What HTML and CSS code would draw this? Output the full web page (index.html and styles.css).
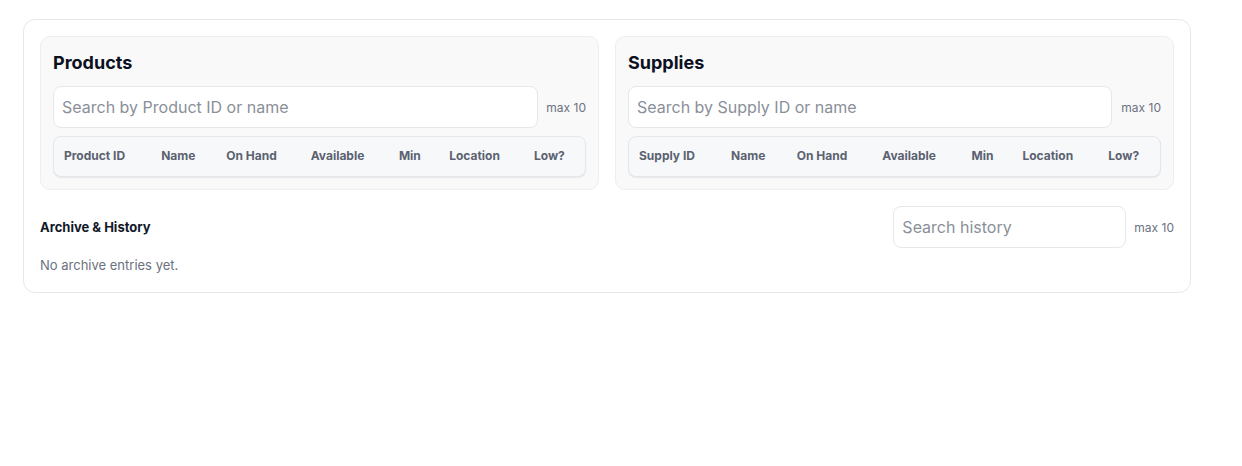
FILE: index.html
```html
<!DOCTYPE html>
<html lang="en">
<head>
<meta charset="utf-8">
<title>Inventory</title>
<link rel="stylesheet" href="styles.css">
</head>
<body>
<div class="card">
  <div class="panels">
    <section class="panel">
      <h2 class="panel-title">Products</h2>
      <div class="search-row">
        <input class="search" type="text" placeholder="Search by Product ID or name">
        <span class="max">max 10</span>
      </div>
      <div class="table-wrap">
        <table class="grid">
          <thead>
            <tr><th>Product ID</th><th>Name</th><th>On Hand</th><th>Available</th><th>Min</th><th>Location</th><th>Low?</th></tr>
          </thead>
        </table>
      </div>
    </section>
    <section class="panel">
      <h2 class="panel-title">Supplies</h2>
      <div class="search-row">
        <input class="search" type="text" placeholder="Search by Supply ID or name">
        <span class="max">max 10</span>
      </div>
      <div class="table-wrap">
        <table class="grid">
          <thead>
            <tr><th>Supply ID</th><th>Name</th><th>On Hand</th><th>Available</th><th>Min</th><th>Location</th><th>Low?</th></tr>
          </thead>
        </table>
      </div>
    </section>
  </div>
  <div class="history">
    <div class="history-head">
      <h3 class="history-title">Archive &amp; History</h3>
      <div class="history-search">
        <input class="search small" type="text" placeholder="Search history">
        <span class="max">max 10</span>
      </div>
    </div>
    <p class="empty">No archive entries yet.</p>
  </div>
</div>
</body>
</html>
```

FILE: styles.css
```css
* { box-sizing: border-box; }
html, body { margin: 0; padding: 0; background: #fff; }
body {
  font-family: Inter, "Noto Sans", Arial, sans-serif;
  color: #111827;
  padding: 19px 0 0 23px;
}
.card {
  width: 1168px;
  border: 1px solid #e5e7eb;
  border-radius: 12px;
  padding: 16px 16px 17px;
  background: #fff;
}
.panels {
  display: grid;
  grid-template-columns: 1fr 1fr;
  gap: 16px;
}
.panel {
  background: #f9f9fa;
  border: 1px solid #eceef1;
  border-radius: 10px;
  padding: 12px;
}
.panel-title {
  margin: 0 0 10px;
  font-size: 18px;
  line-height: 27px;
  font-weight: 700;
  color: #0b1020;
}
.search-row {
  display: flex;
  align-items: center;
  gap: 8px;
}
.search {
  flex: 1;
  height: 42px;
  border: 1px solid #e5e7eb;
  border-radius: 8px;
  background: #fff;
  padding: 0 8px;
  font-family: inherit;
  font-size: 16px;
  color: #111827;
  outline: none;
}
.search::placeholder { color: #8a8f98; }
.max {
  font-size: 12px;
  color: #6b7280;
  white-space: nowrap;
}
.panel:last-child .search-row { gap: 9px; }
.table-wrap {
  margin-top: 8px;
  border: 1px solid #e5e7eb;
  border-radius: 8px;
  background: #f7f8fa;
  overflow: hidden;
  box-shadow: 0 1px 1px rgba(17, 24, 39, 0.08);
}
.grid {
  width: 100%;
  border-collapse: collapse;
}
.grid th {
  text-align: left;
  font-size: 12px;
  line-height: 19px;
  font-weight: 700;
  color: #5a6270;
  padding: 9px 10px 11px;
  white-space: nowrap;
}
.history {
  margin-top: 16px;
}
.history-head {
  display: flex;
  align-items: center;
  justify-content: space-between;
}
.history-title {
  margin: 0;
  font-size: 13px;
  font-weight: 700;
  color: #111827;
}
.history-search {
  display: flex;
  align-items: center;
  gap: 8px;
}
.search.small {
  flex: none;
  width: 233px;
}
.empty {
  margin: 7px 0 0;
  font-size: 13px;
  line-height: 20px;
  color: #6b7280;
}
```
